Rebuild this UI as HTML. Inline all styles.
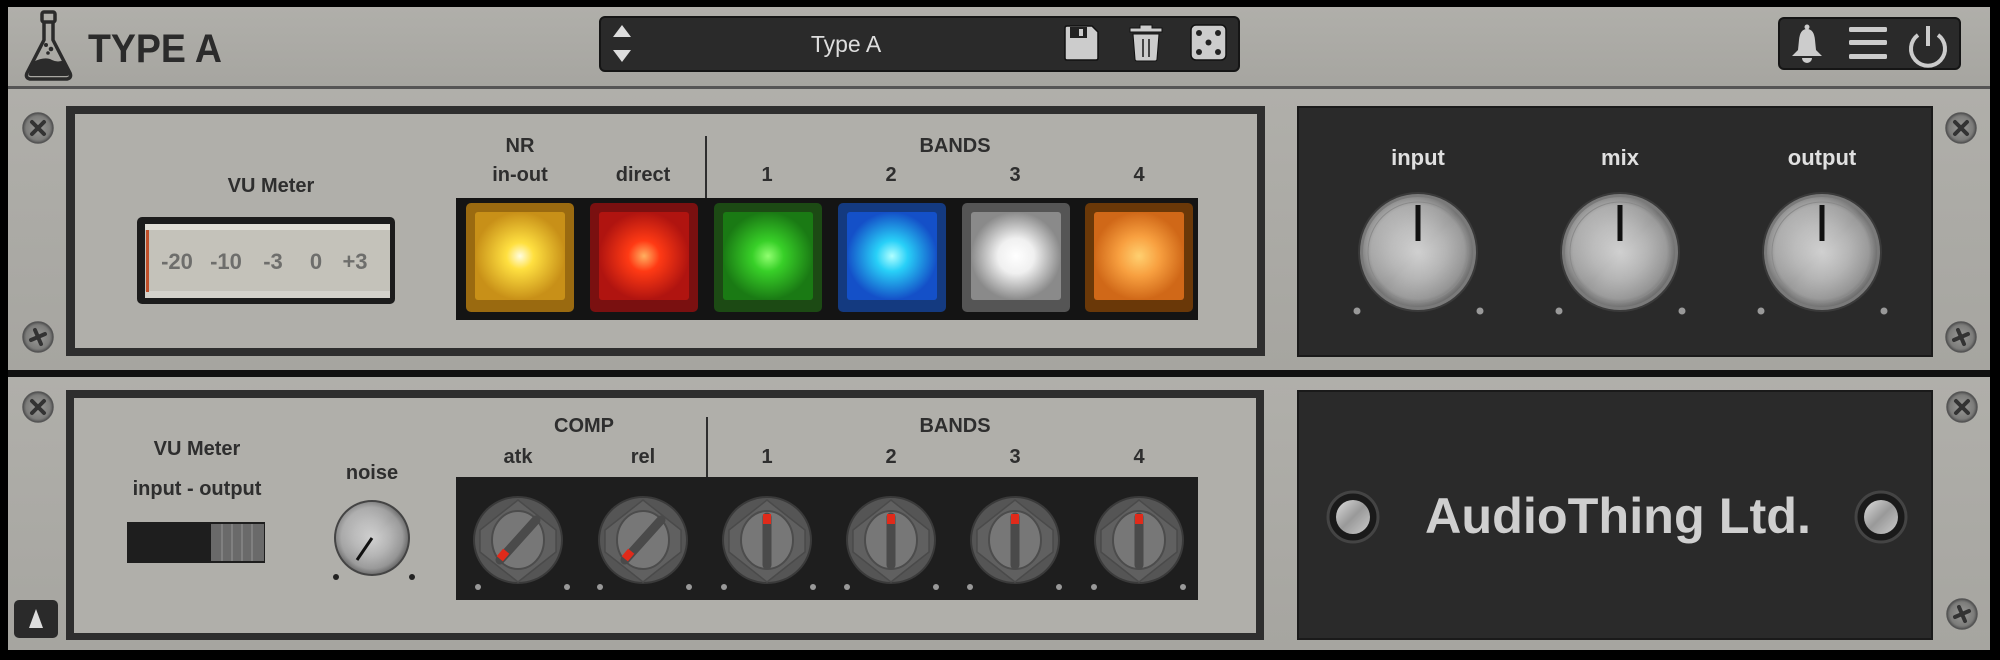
<!DOCTYPE html>
<html><head><meta charset="utf-8"><style>
html,body{margin:0;padding:0;background:#000;width:2000px;height:660px;overflow:hidden}
svg{display:block}
text{font-family:"Liberation Sans",sans-serif;font-weight:bold}
</style></head><body>
<svg width="2000" height="660" viewBox="0 0 2000 660" xmlns="http://www.w3.org/2000/svg">
<defs>
<linearGradient id="rack" x1="0" y1="0" x2="0" y2="1"><stop offset="0" stop-color="#b0afaa"/><stop offset="1" stop-color="#a6a5a0"/></linearGradient>
<radialGradient id="metal" cx="0.5" cy="0.5" r="0.5"><stop offset="0" stop-color="#d0d0d0"/><stop offset="0.5" stop-color="#b4b4b4"/><stop offset="0.85" stop-color="#9a9a9a"/><stop offset="1" stop-color="#707070"/></radialGradient>
<linearGradient id="metalS" x1="0" y1="0" x2="1" y2="1"><stop offset="0" stop-color="#ffffff" stop-opacity="0.35"/><stop offset="0.5" stop-color="#ffffff" stop-opacity="0"/><stop offset="1" stop-color="#000" stop-opacity="0.2"/></linearGradient>
<linearGradient id="metalL" x1="0" y1="0" x2="1" y2="1"><stop offset="0" stop-color="#ddd"/><stop offset="0.5" stop-color="#999"/><stop offset="1" stop-color="#ccc"/></linearGradient>
<radialGradient id="gY"><stop offset="0" stop-color="#fffde0"/><stop offset="0.3" stop-color="#ffe040"/><stop offset="1" stop-color="#c89018"/></radialGradient>
<radialGradient id="gR"><stop offset="0" stop-color="#ffb060"/><stop offset="0.35" stop-color="#ff3a14"/><stop offset="1" stop-color="#b01410"/></radialGradient>
<radialGradient id="gG"><stop offset="0" stop-color="#90ff70"/><stop offset="0.35" stop-color="#38d028"/><stop offset="1" stop-color="#1a7a14"/></radialGradient>
<radialGradient id="gB"><stop offset="0" stop-color="#b0ffff"/><stop offset="0.35" stop-color="#28d0f8"/><stop offset="1" stop-color="#1450c8"/></radialGradient>
<radialGradient id="gW"><stop offset="0" stop-color="#ffffff"/><stop offset="0.4" stop-color="#f0f0f0"/><stop offset="1" stop-color="#8a8a8a"/></radialGradient>
<radialGradient id="gO"><stop offset="0" stop-color="#ffd070"/><stop offset="0.45" stop-color="#f8a040"/><stop offset="1" stop-color="#d06818"/></radialGradient>
<radialGradient id="screw"><stop offset="0" stop-color="#9a9a98"/><stop offset="0.8" stop-color="#7c7c7a"/><stop offset="1" stop-color="#555"/></radialGradient>
<g id="scX"><circle r="15" fill="url(#screw)" stroke="#555" stroke-width="1.5"/><path d="M-6,-6L6,6M6,-6L-6,6" stroke="#333" stroke-width="4" stroke-linecap="round"/></g>
<g id="scP"><circle r="15" fill="url(#screw)" stroke="#555" stroke-width="1.5"/><path d="M-7,3L7,-3M-3,-7L3,7" stroke="#333" stroke-width="4" stroke-linecap="round"/></g>
<g id="bigknob"><circle r="60" fill="#3a3a3a"/><circle r="58" fill="#7a7a7a"/><circle r="55" fill="url(#metal)"/><circle r="55" fill="url(#metalS)"/><circle r="50" fill="none" stroke="#8a8a8a" stroke-width="1"/><rect x="-2.5" y="-47" width="5" height="36" fill="#111"/></g>
<g id="chick"><ellipse rx="44" ry="43" fill="#555" stroke="#3a3a3a" stroke-width="2"/><path d="M0,-40L38,-10L38,12L0,42L-38,12L-38,-10Z" fill="#606060" stroke="#4a4a4a" stroke-width="1.5"/><ellipse rx="26" ry="29" fill="#777" stroke="#4c4c4c" stroke-width="2"/></g>
</defs>
<rect width="2000" height="660" fill="#000"/>
<rect x="8" y="7" width="1982" height="80" fill="url(#rack)"/>
<rect x="8" y="86" width="1982" height="3" fill="#555"/>
<g fill="none" stroke="#2b2b2b" stroke-width="3.5" stroke-linejoin="round">
<path d="M44,22L44,40L27,73Q25,78 30,79L67,79Q72,78 70,73L53,40L53,22"/>
<rect x="42" y="12" width="13" height="10" rx="2"/>
</g>
<path d="M33,62Q45,56 52,60Q58,63 64,60L69,73Q70,76 66,76L31,76Q28,76 29,73Z" fill="#2b2b2b"/>
<circle cx="46" cy="45" r="2" fill="#2b2b2b"/><circle cx="51" cy="49" r="2.3" fill="#2b2b2b"/><circle cx="48" cy="53" r="1.8" fill="#2b2b2b"/>
<text x="88" y="62" font-size="40" fill="#2b2b2b" textLength="134" lengthAdjust="spacingAndGlyphs">TYPE A</text>
<rect x="600" y="17" width="639" height="54" rx="5" fill="#2a2a2a" stroke="#151515" stroke-width="2"/>
<path d="M622,25L631,37L613,37Z M613,50L631,50L622,62Z" fill="#ddd"/>
<text x="846" y="52" font-size="23" fill="#ddd" text-anchor="middle" style="font-weight:normal">Type A</text>
<path d="M1067,26L1092,26L1098,32L1098,58Q1098,60 1096,60L1067,60Q1065,60 1065,58L1065,28Q1065,26 1067,26Z" fill="#ccc" stroke="#111" stroke-width="1.5"/>
<rect x="1070" y="27" width="17" height="11" fill="#222"/><rect x="1079" y="29" width="4" height="7" fill="#ccc"/>
<path d="M1130,32L1162,32L1162,28L1152,28L1152,25L1140,25L1140,28L1130,28Z M1133,34L1159,34L1157,59Q1157,61 1155,61L1137,61Q1135,61 1135,59Z" fill="#ccc" stroke="#111" stroke-width="1"/>
<path d="M1143,39L1143,57M1149,39L1149,57" stroke="#444" stroke-width="2"/>
<rect x="1191" y="25" width="35" height="35" rx="5" fill="#ccc" stroke="#111" stroke-width="1.5"/>
<g fill="#222"><circle cx="1199" cy="33" r="3"/><circle cx="1218" cy="33" r="3"/><circle cx="1208.5" cy="42.5" r="3"/><circle cx="1199" cy="52" r="3"/><circle cx="1218" cy="52" r="3"/></g>
<rect x="1779" y="18" width="181" height="51" rx="5" fill="#2a2a2a" stroke="#151515" stroke-width="2"/>
<path d="M1807,29Q1814,29 1815,40L1816,50L1822,56L1792,56L1798,50L1799,40Q1800,29 1807,29Z" fill="#ccc"/>
<circle cx="1807" cy="27" r="2.5" fill="#ccc"/><path d="M1802,58A5,5 0 0 0 1812,58Z" fill="#ccc"/>
<g fill="#ccc"><rect x="1849" y="27" width="38" height="5" rx="1.5"/><rect x="1849" y="40" width="38" height="5" rx="1.5"/><rect x="1849" y="54" width="38" height="5" rx="1.5"/></g>
<path d="M1918,35A17,17 0 1 0 1938,35" fill="none" stroke="#ccc" stroke-width="4"/><rect x="1926" y="26" width="4" height="20" fill="#ccc"/>

<rect x="8" y="89" width="1982" height="281" fill="url(#rack)"/>
<rect x="66" y="106" width="1199" height="250" fill="#2e2e2e"/>
<rect x="75" y="114" width="1182" height="234" fill="#b0afaa"/>
<use href="#scX" x="38" y="128"/><use href="#scP" x="38" y="337"/>
<use href="#scX" x="1961" y="128"/><use href="#scP" x="1961" y="337"/>
<text x="271" y="192" font-size="20" fill="#2e2e2e" text-anchor="middle">VU Meter</text>
<rect x="137" y="217" width="258" height="87" rx="5" fill="#1c1c1c"/>
<rect x="145" y="224" width="245" height="74" rx="2" fill="#c4c2ba"/>
<rect x="145" y="224" width="245" height="6" fill="#e0ded6"/><rect x="145" y="291" width="245" height="7" fill="#d4d2cb"/>
<rect x="146" y="230" width="3" height="62" fill="#c0502a"/>
<g font-size="22" fill="#6e6e6c" text-anchor="middle" style="font-weight:normal">
<text x="177" y="269">-20</text><text x="226" y="269">-10</text><text x="273" y="269">-3</text><text x="316" y="269">0</text><text x="355" y="269">+3</text>
</g>
<g font-size="20" fill="#2e2e2e" text-anchor="middle">
<text x="520" y="152">NR</text><text x="520" y="181">in-out</text><text x="643" y="181">direct</text>
<text x="955" y="152">BANDS</text>
<text x="767" y="181">1</text><text x="891" y="181">2</text><text x="1015" y="181">3</text><text x="1139" y="181">4</text>
</g>
<rect x="705" y="136" width="2" height="62" fill="#2e2e2e"/>
<rect x="456" y="198" width="742" height="122" fill="#141414"/>
<g>
<rect x="466" y="203" width="108" height="109" rx="5" fill="#9a6a10"/><rect x="475" y="212" width="90" height="88" rx="3" fill="url(#gY)"/>
<rect x="590" y="203" width="108" height="109" rx="5" fill="#7a1010"/><rect x="599" y="212" width="90" height="88" rx="3" fill="url(#gR)"/>
<rect x="714" y="203" width="108" height="109" rx="5" fill="#1c4a14"/><rect x="723" y="212" width="90" height="88" rx="3" fill="url(#gG)"/>
<rect x="838" y="203" width="108" height="109" rx="5" fill="#143a80"/><rect x="847" y="212" width="90" height="88" rx="3" fill="url(#gB)"/>
<rect x="962" y="203" width="108" height="109" rx="5" fill="#555"/><rect x="971" y="212" width="90" height="88" rx="3" fill="url(#gW)"/>
<rect x="1085" y="203" width="108" height="109" rx="5" fill="#6a3808"/><rect x="1094" y="212" width="90" height="88" rx="3" fill="url(#gO)"/>
</g>
<rect x="1298" y="107" width="634" height="249" fill="#2a2a2a" stroke="#1a1a1a" stroke-width="2"/>
<g font-size="22" fill="#e0e0e0" text-anchor="middle">
<text x="1418" y="165">input</text><text x="1620" y="165">mix</text><text x="1822" y="165">output</text>
</g>
<use href="#bigknob" x="1418" y="252"/><use href="#bigknob" x="1620" y="252"/><use href="#bigknob" x="1822" y="252"/>
<g fill="#999"><circle cx="1357" cy="311" r="3.5"/><circle cx="1480" cy="311" r="3.5"/><circle cx="1559" cy="311" r="3.5"/><circle cx="1682" cy="311" r="3.5"/><circle cx="1761" cy="311" r="3.5"/><circle cx="1884" cy="311" r="3.5"/></g>

<rect x="8" y="370" width="1982" height="7" fill="#111"/>
<rect x="8" y="377" width="1982" height="273" fill="url(#rack)"/>
<rect x="66" y="390" width="1198" height="250" fill="#2e2e2e"/>
<rect x="74" y="398" width="1182" height="235" fill="#b0afaa"/>
<use href="#scX" x="38" y="407"/>
<use href="#scX" x="1962" y="407"/><use href="#scP" x="1962" y="614"/>
<rect x="14" y="600" width="44" height="38" rx="5" fill="#2a2a2a"/>
<path d="M36,609L43,628L29,628Z" fill="#ddd"/>
<g font-size="20" fill="#2e2e2e" text-anchor="middle">
<text x="197" y="455">VU Meter</text><text x="197" y="495">input - output</text>
<text x="372" y="479">noise</text>
<text x="584" y="432">COMP</text><text x="518" y="463">atk</text><text x="643" y="463">rel</text>
<text x="955" y="432">BANDS</text>
<text x="767" y="463">1</text><text x="891" y="463">2</text><text x="1015" y="463">3</text><text x="1139" y="463">4</text>
</g>
<rect x="706" y="417" width="2" height="61" fill="#2e2e2e"/>
<rect x="127" y="522" width="138" height="41" fill="#1e1e1e"/>
<rect x="211" y="524" width="53" height="37" fill="#6a6a6a"/>
<g stroke="#888" stroke-width="1.5"><path d="M222,524V561M232,524V561M242,524V561M252,524V561"/></g>
<circle cx="372" cy="538" r="38" fill="#444"/><circle cx="372" cy="538" r="36" fill="url(#metal)"/><circle cx="372" cy="538" r="36" fill="url(#metalS)"/>
<path d="M372,538L357,560" stroke="#111" stroke-width="3"/>
<circle cx="336" cy="577" r="3" fill="#222"/><circle cx="412" cy="577" r="3" fill="#222"/>
<rect x="456" y="477" width="742" height="123" fill="#1e1e1e"/>
<g>
<use href="#chick" x="518" y="540"/><use href="#chick" x="643" y="540"/><use href="#chick" x="767" y="540"/>
<use href="#chick" x="891" y="540"/><use href="#chick" x="1015" y="540"/><use href="#chick" x="1139" y="540"/>
</g>
<g stroke="#4a4a4a" stroke-width="9" stroke-linecap="round">
<path d="M500,560L536,520"/><path d="M625,560L661,520"/>
<path d="M767,517V565M891,517V565M1015,517V565M1139,517V565"/>
</g>
<g fill="#e02a1a"><rect x="499" y="550" width="8" height="10" transform="rotate(40 503 555)"/><rect x="624" y="550" width="8" height="10" transform="rotate(40 628 555)"/>
<rect x="763" y="514" width="8" height="10"/><rect x="887" y="514" width="8" height="10"/><rect x="1011" y="514" width="8" height="10"/><rect x="1135" y="514" width="8" height="10"/></g>
<g fill="#999"><circle cx="478" cy="587" r="3"/><circle cx="567" cy="587" r="3"/><circle cx="600" cy="587" r="3"/><circle cx="689" cy="587" r="3"/><circle cx="724" cy="587" r="3"/><circle cx="813" cy="587" r="3"/><circle cx="847" cy="587" r="3"/><circle cx="936" cy="587" r="3"/><circle cx="970" cy="587" r="3"/><circle cx="1059" cy="587" r="3"/><circle cx="1094" cy="587" r="3"/><circle cx="1183" cy="587" r="3"/></g>
<rect x="1298" y="391" width="634" height="248" fill="#2a2a2a" stroke="#1a1a1a" stroke-width="2"/>
<text x="1618" y="533" font-size="50" fill="#cfcfcf" text-anchor="middle" textLength="386" lengthAdjust="spacingAndGlyphs">AudioThing Ltd.</text>
<circle cx="1353" cy="517" r="25" fill="#1a1a1a" stroke="#444" stroke-width="3"/><circle cx="1353" cy="517" r="17" fill="url(#metalL)"/>
<circle cx="1881" cy="517" r="25" fill="#1a1a1a" stroke="#444" stroke-width="3"/><circle cx="1881" cy="517" r="17" fill="url(#metalL)"/>
</svg>
</body></html>
